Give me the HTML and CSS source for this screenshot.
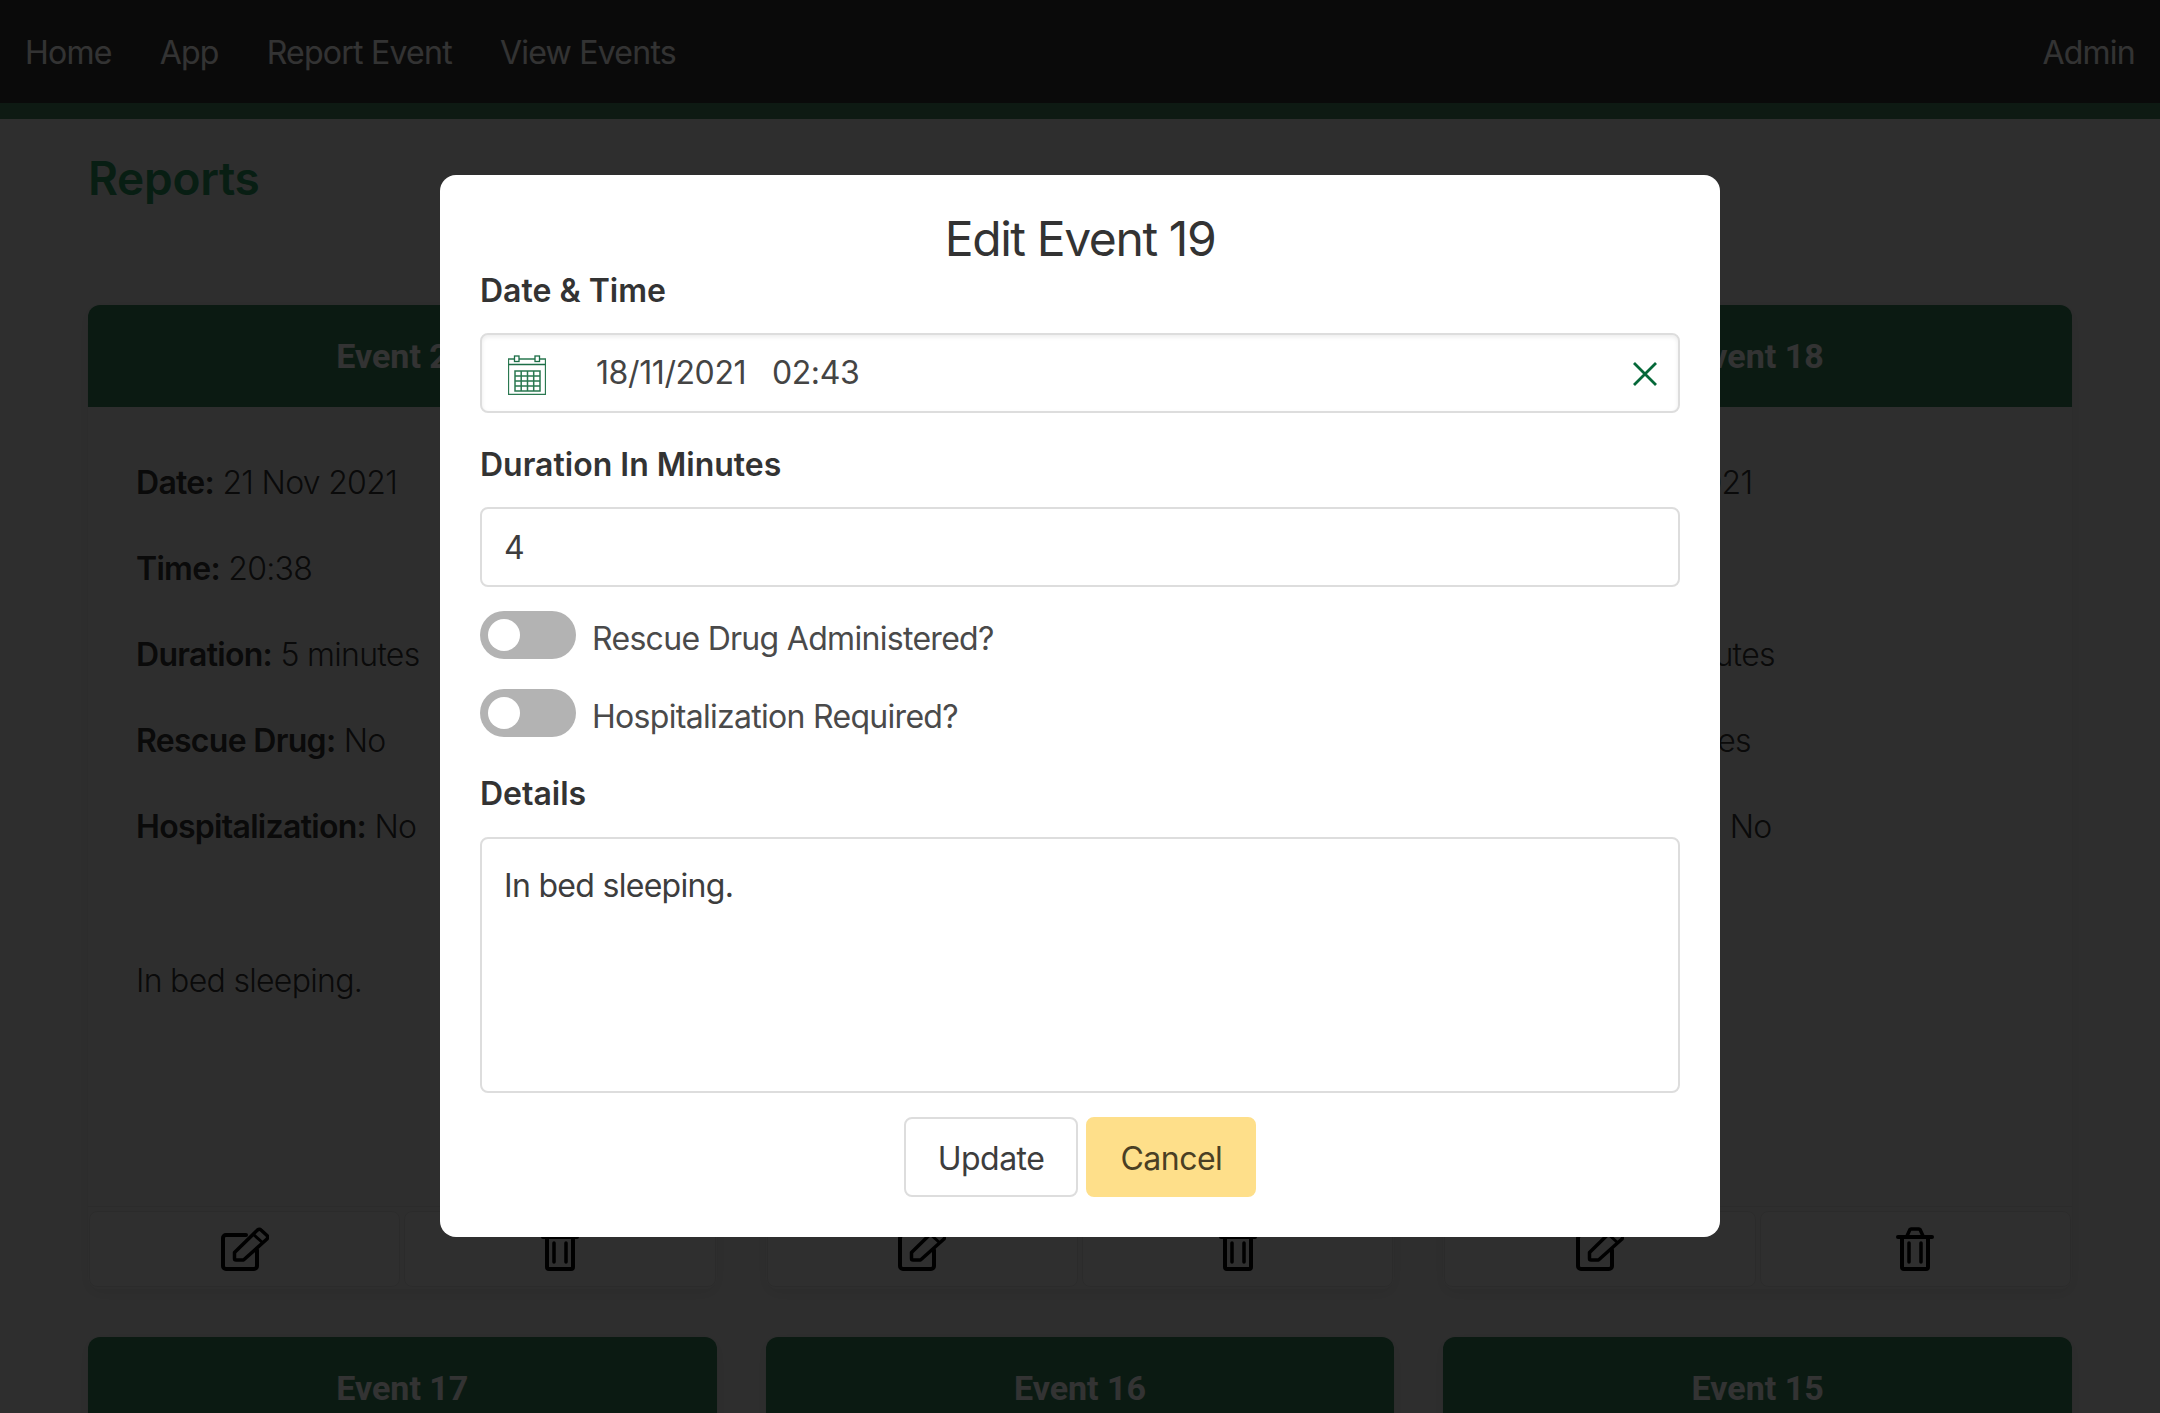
FILE: index.html
```html
<!DOCTYPE html>
<html>
<head>
    <title>Reports</title>
    <meta name="viewport" content="width=device-width, initial-scale=1">
    <link rel="stylesheet" href="styles.css">
</head>
<body>
    <svg class="sprites" xmlns="http://www.w3.org/2000/svg">
        <symbol id="icon-edit" viewBox="0 0 48 44">
            <path d="M25 8H5a3 3 0 0 0-3 3v28a3 3 0 0 0 3 3h28a3 3 0 0 0 3-3V23" fill="none" stroke="currentColor" stroke-width="4" stroke-linecap="round"/>
            <path d="M13.500 25.500L36.500 3q2-1.500 3.500 0l6 5.500q1.500 1.500 0 3.500L22.500 33h-7.500q-1.500 0-1.500-1.500z" fill="none" stroke="currentColor" stroke-width="3.500" stroke-linejoin="round"/>
            <path d="M32 7l10 9" stroke="currentColor" stroke-width="3"/>
        </symbol>
        <symbol id="icon-trash" viewBox="0 0 38 44">
            <path d="M2 10h34" stroke="currentColor" stroke-width="4" stroke-linecap="round"/>
            <path d="M11 9l2.500-5.500a2 2 0 0 1 2-1.500h7a2 2 0 0 1 2 1.500L27 9" fill="none" stroke="currentColor" stroke-width="3.500"/>
            <path d="M6 11v29a2 2 0 0 0 2 2h22a2 2 0 0 0 2-2V11" fill="none" stroke="currentColor" stroke-width="4"/>
            <path d="M13 16v19M25 16v19" stroke="currentColor" stroke-width="3.500" stroke-linecap="round"/>
        </symbol>
    </svg>

    <nav class="navbar">
        <div class="nav-links">
            <a href="#">Home</a>
            <a href="#">App</a>
            <a href="#">Report Event</a>
            <a href="#">View Events</a>
        </div>
        <a href="#">Admin</a>
    </nav>

    <main class="page">
        <h1>Reports</h1>
        <div class="cards">
            <div class="card">
                <h2>Event 20</h2>
                <div class="card-body">
                    <p><b>Date:</b> 21 Nov 2021</p>
                    <p><b>Time:</b> 20:38</p>
                    <p><b>Duration:</b> 5 minutes</p>
                    <p><b>Rescue Drug:</b> No</p>
                    <p><b>Hospitalization:</b> No</p>
                    <p class="notes">In bed sleeping.</p>
                </div>
                <div class="card-actions">
                    <button><svg class="icon-edit"><use href="#icon-edit"/></svg></button>
                    <button><svg class="icon-trash"><use href="#icon-trash"/></svg></button>
                </div>
            </div>
            <div class="card">
                <h2>Event 19</h2>
                <div class="card-body">
                    <p><b>Date:</b> 18 Nov 2021</p>
                    <p><b>Time:</b> 02:43</p>
                    <p><b>Duration:</b> 4 minutes</p>
                    <p><b>Rescue Drug:</b> No</p>
                    <p><b>Hospitalization:</b> No</p>
                    <p class="notes">In bed sleeping.</p>
                </div>
                <div class="card-actions">
                    <button><svg class="icon-edit"><use href="#icon-edit"/></svg></button>
                    <button><svg class="icon-trash"><use href="#icon-trash"/></svg></button>
                </div>
            </div>
            <div class="card">
                <h2>Event 18</h2>
                <div class="card-body">
                    <p><b>Date:</b> 12 Nov 2021</p>
                    <p><b>Time:</b> 11:15</p>
                    <p><b>Duration:</b> 5 minutes</p>
                    <p><b>Rescue Drug:</b> Yes</p>
                    <p><b>Hospitalization:</b> No</p>
                </div>
                <div class="card-actions">
                    <button><svg class="icon-edit"><use href="#icon-edit"/></svg></button>
                    <button><svg class="icon-trash"><use href="#icon-trash"/></svg></button>
                </div>
            </div>
            <div class="card"><h2>Event 17</h2></div>
            <div class="card"><h2>Event 16</h2></div>
            <div class="card"><h2>Event 15</h2></div>
        </div>
    </main>

    <div class="backdrop">
        <form class="modal">
            <h3>Edit Event 19</h3>

            <label class="field-label">Date &amp; Time</label>
            <div class="date-field">
                <svg class="calendar" viewBox="0 0 38 40" xmlns="http://www.w3.org/2000/svg">
                    <path d="M.5 4h37v35.500H.5z" fill="none" stroke="#2a7850" stroke-width="1.300"/>
                    <path d="M.5 9.500h37" stroke="#1c6e47" stroke-width="1.300"/>
                    <rect x="6.500" y="1" width="4.500" height="5.500" fill="#fff" stroke="#1c6e47" stroke-width="1.300"/>
                    <rect x="27" y="1" width="4.500" height="5.500" fill="#fff" stroke="#1c6e47" stroke-width="1.300"/>
                    <path d="M7 16h25v20H7zM7 21h25M7 26h25M7 31h25M13.200 16v20M19.500 16v20M25.700 16v20" fill="none" stroke="#2a7850" stroke-width="1.500"/>
                </svg>
                <input type="text" class="date-input" value="18/11/2021   02:43">
                <svg class="clear" viewBox="0 0 24 24" xmlns="http://www.w3.org/2000/svg">
                    <path d="M1 1l22 22M23 1L1 23" stroke="#056839" stroke-width="2.800"/>
                </svg>
            </div>

            <label class="field-label label-gap">Duration In Minutes</label>
            <input type="text" class="text-input" value="4">

            <label class="switch switch-first"><span class="knob"></span><span class="switch-text">Rescue Drug Administered?</span></label>
            <label class="switch"><span class="knob"></span><span class="switch-text">Hospitalization Required?</span></label>

            <label class="field-label details-gap">Details</label>
            <textarea class="text-input details">In bed sleeping.</textarea>

            <div class="modal-actions">
                <button type="button" class="btn">Update</button>
                <button type="button" class="btn btn-cancel">Cancel</button>
            </div>
        </form>
    </div>
</body>
</html>
```

FILE: styles.css
```css
html, body {
    height: 100%;
    margin: 0;
    overflow: hidden;
}

body {
    background-color: #e6e6e6;
    font-family: Inter, 'Noto Sans', sans-serif;
    font-size: 32px;
    letter-spacing: -0.7px;
    color: #333;
}

.sprites {
    display: none;
}

.navbar {
    display: flex;
    justify-content: space-between;
    align-items: center;
    height: 102px;
    padding: 1px 25px 0;
    background-color: #323232;
    border-bottom: 16px solid #46805f;
}

.navbar a {
    color: #fff;
    text-decoration: none;
    letter-spacing: -0.75px;
}

.nav-links {
    display: flex;
    gap: 48px;
}

.page {
    padding: 0 88px;
}

.page h1 {
    margin: 0;
    height: 186px;
    padding-top: 30px;
    box-sizing: border-box;
    font-size: 46px;
    letter-spacing: -0.3px;
    line-height: 58px;
    font-weight: 600;
    color: #2c9460;
}

.cards {
    display: grid;
    grid-template-columns: repeat(3, 1fr);
    gap: 48px 49px;
}

.card {
    background-color: #e6e6e6;
    border-radius: 12px;
    box-shadow: 0 4px 16px rgba(0, 0, 0, 0.08);
}

.card h2 {
    margin: 0;
    height: 102px;
    border-radius: 12px 12px 0 0;
    background-color: #37825a;
    color: #fff;
    font-family: Roboto, sans-serif;
    font-size: 34px;
    font-weight: 700;
    letter-spacing: 0;
    line-height: 102px;
    text-align: center;
}

.card-body {
    height: 800px;
    box-sizing: border-box;
    padding: 52px 48px 0;
    border-bottom: 1px solid #d8d8d8;
    font-weight: 300;
}

.card-body p {
    margin: 0 0 38px;
    line-height: 48px;
}

.card-body b {
    font-weight: 600;
    letter-spacing: -0.7px;
}

.card-body .notes {
    margin-top: 106px;
}

.card-actions {
    display: flex;
    gap: 4px;
    padding: 4px 1px 2px;
}

.card-actions button {
    flex: 1;
    height: 76px;
    border: 1px solid #d8d8d8;
    border-radius: 8px;
    background-color: #e8e8e8;
    color: #000;
    padding: 0;
    display: flex;
    align-items: center;
    justify-content: center;
}

.icon-edit {
    width: 48px;
    height: 44px;
}

.icon-trash {
    width: 38px;
    height: 44px;
}

.backdrop {
    position: fixed;
    top: 0;
    left: 0;
    right: 0;
    bottom: 0;
    padding-bottom: 1px;
    display: flex;
    align-items: center;
    justify-content: center;
    background-color: rgba(0, 0, 0, 0.8);
}

.modal {
    width: 1280px;
    height: 1062px;
    box-sizing: border-box;
    padding: 35px 40px 40px;
    display: flex;
    flex-direction: column;
    border-radius: 16px;
    background-color: #fff;
}

.modal h3 {
    margin: 0;
    font-size: 48px;
    font-weight: 400;
    letter-spacing: -1.4px;
    line-height: 58px;
    text-align: center;
}

.field-label {
    display: block;
    margin: -1px 0 18px;
    font-weight: 600;
    letter-spacing: 0;
    line-height: 48px;
}

.label-gap {
    margin-top: 28px;
    margin-bottom: 18px;
}

.details-gap {
    margin-top: 33px;
    margin-bottom: 19px;
}

.date-field {
    display: flex;
    align-items: center;
    height: 80px;
    box-sizing: border-box;
    padding: 0 21px 0 26px;
    border: 2px solid #ddd;
    border-radius: 8px;
    box-shadow: inset 0 2px 4px rgba(0, 0, 0, 0.08);
}

.calendar {
    width: 38px;
    height: 40px;
    flex: none;
    margin-top: 3px;
}

.date-input {
    flex: 1;
    margin-left: 50px;
    padding: 0 0 2px;
    border: none;
    outline: none;
    background: none;
    font: inherit;
    letter-spacing: -0.4px;
    color: #444;
    white-space: pre;
}

.clear {
    width: 24px;
    height: 24px;
    flex: none;
    margin-top: 2px;
}

.text-input {
    display: block;
    height: 80px;
    box-sizing: border-box;
    padding: 0 22px;
    border: 2px solid #ddd;
    border-radius: 8px;
    outline: none;
    background: #fff;
    font: inherit;
    letter-spacing: inherit;
    color: #3d3d3d;
}

.details {
    height: 256px;
    padding: 24px 22px;
    line-height: 46px;
    resize: none;
}

.switch {
    display: flex;
    align-items: center;
    height: 48px;
    margin-top: 30px;
    color: #4a4a4a;
}

.switch-first {
    margin-top: 24px;
}

.switch-text {
    padding-top: 6px;
}

.knob {
    position: relative;
    width: 96px;
    height: 48px;
    margin-right: 16px;
    border-radius: 24px;
    background-color: #b3b3b3;
}

.knob::after {
    content: "";
    position: absolute;
    top: 8px;
    left: 8px;
    width: 32px;
    height: 32px;
    border-radius: 50%;
    background-color: #fff;
}

.modal-actions {
    display: flex;
    justify-content: center;
    gap: 8px;
    margin-top: 24px;
}

.btn {
    height: 80px;
    padding: 2px 32px 0;
    border: 2px solid #ddd;
    border-radius: 8px;
    background-color: #fff;
    font: inherit;
    letter-spacing: -0.5px;
    color: #3d3d3d;
}

.btn-cancel {
    border-color: #fedf8a;
    background-color: #fedf8a;
    color: #4a3f24;
}
```
